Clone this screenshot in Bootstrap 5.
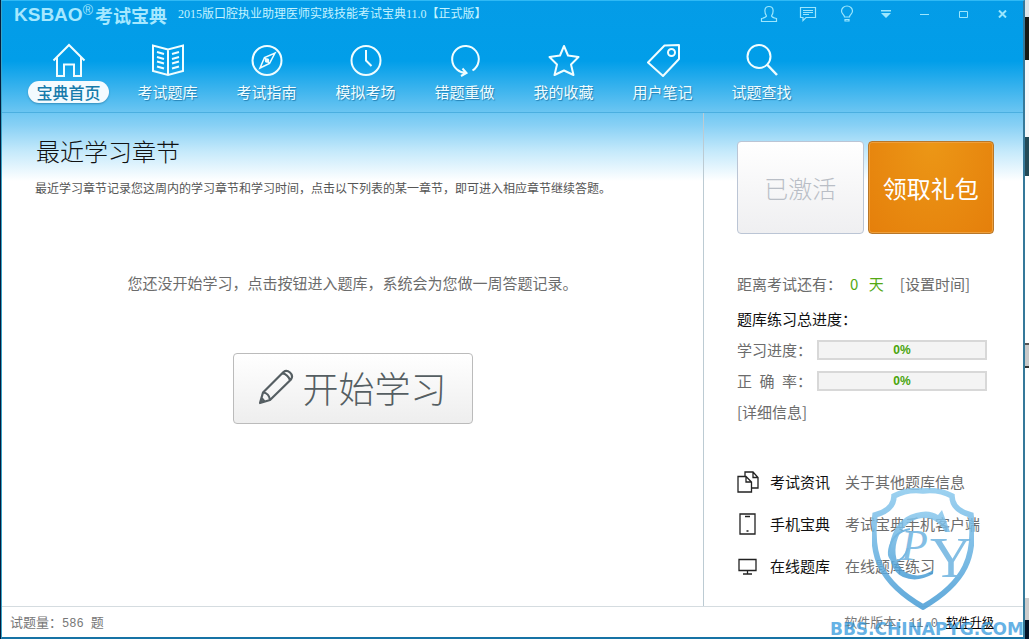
<!DOCTYPE html>
<html lang="zh-CN">
<head>
<meta charset="utf-8">
<meta name="viewport" content="width=device-width, initial-scale=1">
<title>考试宝典</title>
<link rel="stylesheet" href="https://cdn.jsdelivr.net/npm/bootstrap@5.3.0/dist/css/bootstrap.min.css">
<script src="https://cdn.jsdelivr.net/npm/bootstrap@5.3.0/dist/js/bootstrap.bundle.min.js"></script>
<style>
body{font:15px/20px "Noto Sans CJK SC",sans-serif;color:#6c6c6c;background:#fff}
a{color:inherit;text-decoration:none}
button{font-family:inherit}
svg{fill:none;stroke:currentColor;flex:none}
.desk{min-height:100vh;background:#031b3b;padding-left:1px}
.desk-edge{width:4px;background:linear-gradient(#dbe6ea 0 17px,#151a16 17px 60px,#f6f8f9 60px 137px,#234a56 137px 176px,#fff 176px 343px,#555 343px 345px,#c9c9c9 345px 366px,#333 366px 368px,#fff 368px 598px,#ccc 598px 620px,#041226 620px)}
.app{border:1px solid #3aa5c9;border-top:1px solid #2fb9f5;border-right:2px solid #35799a;border-bottom:2px solid #1673a5;background:#fff;min-width:0}
.top{background:linear-gradient(#049ce7 0,#019ee9 60px,#6dc6f2 112px);border-bottom:1px solid #4bafe0;color:#fff}
.titlebar{height:30px;padding-left:12px;color:#c4f3ff}
.logo-en{font:bold 19px/28px "Liberation Sans",sans-serif;color:#a5e8ff}
.reg{font:14px/14px "Liberation Sans",sans-serif;margin-top:2px;color:#a5e8ff}
.logo-cn{font-size:18px;line-height:28px;font-weight:700;color:#a5e8ff;margin-left:2px}
.caption{font:12px/27px "Liberation Serif","Noto Sans CJK SC",serif;margin-left:11px;white-space:nowrap}
.winbtns{margin-right:1px}
.winbtns button{width:39px;height:26px;padding:0;border:0;background:none;color:#9ce6fd;display:flex;align-items:center;justify-content:center}
.mainnav{padding:12px 0 9px 17px}
.mainnav a{width:99px;display:flex;flex-direction:column;align-items:center;gap:4px;text-shadow:1px 1px 1px #2380b4;color:#f0fdff;white-space:nowrap}
.mainnav span{line-height:22px;padding:0 9px;border-radius:11px}
.mainnav .active span{background:#f3fbff;color:#167bab;text-shadow:none;font-weight:500;font-size:16px;padding:0 8px;box-shadow:0 1px 2px #348fbd}
.mainnav svg{stroke-width:2}
.content{background:linear-gradient(#70c8f3 0,#87d0f5 12px,#c4e9fb 38px,#fff 68px)}
.study{padding:22px 0 0 33px}
.study h1{font-size:24px;line-height:32px;color:#111;font-weight:300;margin:0 0 0 1px}
.hint{font-size:12px;line-height:18px;margin:12px 0 0;color:#555}
.center-area{padding-right:33px;margin-top:76px}
.start{margin-top:60px;width:240px;height:71px;border:1px solid #bbb;border-radius:4px;background:linear-gradient(#fff,#eee);color:#555e62;font-size:36px;line-height:40px;padding:0 0 4px;font-weight:300}
.side{width:320px;border-left:1px solid #bccbd3;padding:28px 29px 24px 33px}
.tile{height:93px;flex:1;border-radius:4px;font-size:24px;padding:0;font-weight:300}
.done{border:1px solid #bbc5d5;background:linear-gradient(#fff,#efeff1);color:#b9bec6}
.gift{border:1px solid #b87729;background:radial-gradient(ellipse at 50% 0,#ec9716,#e57f0b);color:#fff;box-shadow:inset 0 0 0 1px #ef9f3b;font-weight:400}
.countdown{margin-top:40px}
.total{margin-top:15px}
.rate{margin-top:11px}
.green{color:#54a914}
.dark{color:#111}
.meter{height:20px;width:170px;border:2px solid #d8d8d8;border-radius:0;background:#f4f4f4;margin-left:5px;justify-content:center;align-items:center;font:bold 12px/16px "Liberation Sans",sans-serif;color:#48a40b}
.links{display:grid;gap:20px;margin-top:49px}
.links a{display:grid;grid-template-columns:33px 75px auto;align-items:center;white-space:nowrap}
.links b{font-weight:400;color:#111}
.links svg{color:#222}
.status{height:31px;border-top:1px solid #d5dce0;font-size:13px;padding:0 29px 0 8px;color:#777}
.num{font:12px "Liberation Mono",monospace}
.upgrade{font-size:12px;color:#000;text-decoration:underline;margin-left:8px}
.shield{position:absolute;right:49px;bottom:27px;pointer-events:none}
.site{position:absolute;right:-1px;bottom:-2px;font:bold 17px/20px "DejaVu Sans",sans-serif;color:#3399dd;opacity:.75;pointer-events:none}
</style>
</head>
<body>
<div class="desk d-flex">
<div class="app d-flex flex-column flex-grow-1 position-relative">
<header class="top">
  <div class="titlebar d-flex align-items-start">
    <span class="logo-en">KSBAO</span><span class="reg">®</span><span class="logo-cn">考试宝典</span>
    <span class="caption">2015版口腔执业助理医师实践技能考试宝典11.0【正式版】</span>
    <div class="winbtns d-flex ms-auto">
      <button aria-label="用户"><svg width="18" height="18" viewBox="0 0 18 18" stroke-width="1.2"><path d="M6.5 11C4.500 8 3.500 1.500 9 1.500S13.500 8 11.500 11Q12 12.500 16.500 13.500V16.500H1.500V13.500Q6 12.500 6.500 11Z"/></svg></button>
      <button aria-label="消息"><svg width="18" height="16" viewBox="0 0 18 16" stroke-width="1.2"><path d="M1.500 1.500H16.500V11.500H7L4 14.500V11.500H1.500ZM4 4.500H14M4 6.500H14M4 8.500H10"/></svg></button>
      <button aria-label="提示"><svg width="14" height="18" viewBox="0 0 14 18" stroke-width="1.2"><path d="M4.500 12C4.500 9.500 1.500 9 1.500 6A5.500 5 0 0 1 12.500 6C12.500 9 9.500 9.500 9.500 12ZM5 14.500H9V16H5Z"/></svg></button>
      <button aria-label="菜单"><svg width="10" height="8" viewBox="0 0 10 8"><path d="M0 0H10V1.500H0ZM0 3H10L5 8Z" fill="currentColor" stroke="none"/></svg></button>
      <button aria-label="最小化"><svg width="9" height="3" viewBox="0 0 9 3"><path d="M0 1.500H9"/></svg></button>
      <button aria-label="最大化"><svg width="9" height="7" viewBox="0 0 9 7"><path d="M.5 .5H8.500V6.500H.5Z"/></svg></button>
      <button aria-label="关闭"><svg width="9" height="8" viewBox="0 0 9 8" stroke-width="2"><path d="M1 .5 8 7.500M8 .5 1 7.500"/></svg></button>
    </div>
  </div>
  <nav class="mainnav d-flex">
    <a href="#" class="active"><svg width="34" height="34" viewBox="0 0 34 34"><path d="M1.500 17.500 17 2 32.500 17.500M5 14.500V33H12V21.500H22V33H29V14.500"/></svg><span>宝典首页</span></a>
    <a href="#"><svg width="34" height="34" viewBox="0 0 34 34"><path d="M17 6.500 2 2.500V28L17 32 32 28V2.500ZM17 6.500V32M6 9l7 2M6 14l7 2M6 18.500l7 2M6 23.500l7 2M28 9l-7 2M28 14l-7 2M28 18.500l-7 2M28 23.500l-7 2"/></svg><span>考试题库</span></a>
    <a href="#"><svg width="34" height="34" viewBox="0 0 34 34"><circle cx="17" cy="17.500" r="14.500"/><path d="M25 10 19.500 20.500 10 25 14.500 14.500ZM14.500 14.500l5 6" stroke-width="1.600"/><circle cx="17" cy="17.500" r="1.300"/></svg><span>考试指南</span></a>
    <a href="#"><svg width="34" height="34" viewBox="0 0 34 34"><circle cx="17" cy="17.500" r="14.500"/><path d="M17 7V17.500L22.500 23"/></svg><span>模拟考场</span></a>
    <a href="#"><svg width="34" height="34" viewBox="0 0 34 34"><path d="M24.500 27.500A13.300 13.300 0 1 0 9 26.500Q13 30 18 30M14.500 25.500 18.500 30 13 33"/></svg><span>错题重做</span></a>
    <a href="#"><svg width="34" height="34" viewBox="0 0 34 34" stroke-linejoin="round"><path d="M17 3 21 12.500 31.500 14 24 21.500 26.500 32 17 27.500 7.500 32 10 21.500 2.500 14 13 12.500Z"/></svg><span>我的收藏</span></a>
    <a href="#"><svg width="34" height="34" viewBox="0 0 34 34" stroke-linejoin="round"><path d="M18.500 2.500 33 2V16L17 33 2 19.500Z"/><circle cx="25.500" cy="9.500" r="3.500"/></svg><span>用户笔记</span></a>
    <a href="#"><svg width="34" height="34" viewBox="0 0 34 34"><circle cx="14" cy="13.500" r="11.500"/><path d="M22 21.500 32 32" stroke-width="2.500"/></svg><span>试题查找</span></a>
  </nav>
</header>
<main class="content d-flex flex-grow-1">
  <section class="study flex-grow-1">
    <h1>最近学习章节</h1>
    <p class="hint">最近学习章节记录您这周内的学习章节和学习时间，点击以下列表的某一章节，即可进入相应章节继续答题。</p>
    <div class="center-area d-flex flex-column align-items-center">
      <div>您还没开始学习，点击按钮进入题库，系统会为您做一周答题记录。</div>
      <button class="start d-flex align-items-center justify-content-center gap-2"><svg width="36" height="36" viewBox="0 0 36 36" stroke-width="2.200" stroke-linejoin="round"><path d="M2 34 5 23.500 25.500 3Q28.500 .5 32 3.500T33 10.500L12 31ZM5 23.500Q11 24 12 31M24.500 4Q30 6 32 11M2.500 33.500l1.500-4 2.500 3Z"/></svg>开始学习</button>
    </div>
  </section>
  <aside class="side flex-shrink-0">
    <div class="d-flex gap-1"><button class="tile done">已激活</button><button class="tile gift">领取礼包</button></div>
    <div class="countdown d-flex"><span>距离考试还有：</span><span class="green ms-2">0&ensp;&thinsp;天</span><a href="#" class="ms-3">[设置时间]</a></div>
    <div class="total dark">题库练习总进度：</div>
    <div class="rate d-flex"><span>学习进度：</span><div class="progress meter" role="progressbar" aria-label="学习进度" aria-valuenow="0" aria-valuemin="0" aria-valuemax="100">0%</div></div>
    <div class="rate d-flex"><span>正&ensp;确&ensp;率：</span><div class="progress meter" role="progressbar" aria-label="正确率" aria-valuenow="0" aria-valuemin="0" aria-valuemax="100">0%</div></div>
    <div class="rate"><a href="#">[详细信息]</a></div>
    <div class="links">
      <a href="#"><svg width="22" height="22" viewBox="0 0 22 22" stroke-width="1.300"><path d="M1 5.500H9L14.500 11V21H1ZM9 5.500V11H14.500M8 5V1H16L21 6.500V17H15M16 1V6.500H21"/></svg><b>考试资讯</b><span>关于其他题库信息</span></a>
      <a href="#"><svg width="22" height="22" viewBox="0 0 22 22" stroke-width="1.300"><path d="M3 1H18V21H3ZM8 3.500H13M9.500 18H11.500" /></svg><b>手机宝典</b><span>考试宝典手机客户端</span></a>
      <a href="#"><svg width="22" height="22" viewBox="0 0 22 22" stroke-width="1.300"><path d="M2 4.500H19V15.500H2ZM10.500 15.500V19M6 19H15"/></svg><b>在线题库</b><span>在线题库练习</span></a>
    </div>
  </aside>
</main>
<footer class="status d-flex align-items-center">
  <span>试题量：<span class="num">586 </span>题</span>
  <span class="ms-auto">软件版本：<span class="num">11.0</span></span><a href="#" class="upgrade">软件升级</a>
</footer>
<svg class="shield" width="102" height="122" viewBox="0 0 102 122" aria-hidden="true">
  <defs><linearGradient id="sg" x1="0" y1="0" x2="0" y2="1"><stop offset="0" stop-color="#8bc9ee"/><stop offset="1" stop-color="#479cd5"/></linearGradient></defs>
  <g opacity=".85" stroke="none" fill="url(#sg)">
  <path d="M51 3Q67 1 80 8Q80 22 99 27C104 68 94 94 51 119C8 94-2 68 3 27Q22 22 22 8Q35 1 51 3Z" fill="none" stroke="url(#sg)" stroke-width="5.500"/>
  <path d="M70 22 78 44H73Q63 26 45 31C20 39 17 76 35 85Q48 91 61 82V86Q45 95 31 89C9 79 14 32 44 25Q57 21 66 27Z"/>
  </g>
  <g stroke="none" fill="#76b8e2" opacity=".9" font-family="Liberation Serif, serif"><text x="29" y="72" font-style="italic" font-size="44">P</text><text x="58" y="89" font-size="58">Y</text></g>
  <path d="M38 41Q22 44 18 58T24 73Q32 72 36 60" stroke="#76b8e2" stroke-width="2"/>
</svg>
<div class="site">BBS.CHINAPYG.COM</div>
</div>
<div class="desk-edge flex-shrink-0"></div>
</div>
</body>
</html>
